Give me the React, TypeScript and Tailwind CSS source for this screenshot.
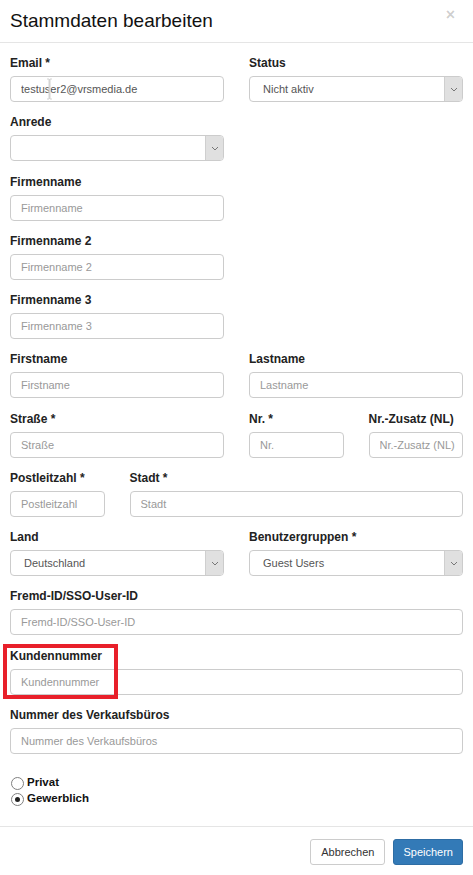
import React from 'react';

const font = "font-['Liberation_Sans',Arial,Helvetica,sans-serif]";

type Span = 1 | 2 | 3 | 4;

const spanClass: Record<Span, string> = {
  1: 'col-span-1',
  2: 'col-span-2',
  3: 'col-span-3',
  4: 'col-span-4',
};

const Label: React.FC<{ text: string }> = ({ text }) => (
  <div className="h-[17px] leading-[17px] mb-[4px] text-[12px] font-bold text-[#222] whitespace-nowrap">{text}</div>
);

const TextField: React.FC<{ label: string; span: Span; placeholder?: string; value?: string; children?: React.ReactNode }> = ({
  label,
  span,
  placeholder,
  value,
  children,
}) => (
  <div className={`${spanClass[span]} relative mb-[12.25px]`}>
    <Label text={label} />
    <div className="relative">
      <input
        readOnly
        defaultValue={value}
        placeholder={placeholder ?? label}
        className="block w-full h-[26px] pl-[10px] pr-[2px] text-[11px] text-[#555] bg-white border border-[#ccc] rounded-[4px] outline-none placeholder:text-[#999]"
      />
      {children}
    </div>
  </div>
);

const SelectField: React.FC<{ label: string; span: Span; value?: string }> = ({ label, span, value }) => (
  <div className={`${spanClass[span]} mb-[12.25px]`}>
    <Label text={label} />
    <div className="flex h-[26px] bg-white border border-[#ccc] rounded-[4px] overflow-hidden">
      <div className="flex-1 flex items-center pl-[13px] text-[11px] text-[#555]">{value}</div>
      <div className="w-[18px] flex items-center justify-center bg-[#e0e0e0] border-l border-[#cfcfcf]">
        <svg width="8" height="5" viewBox="0 0 8 5" fill="none">
          <path d="M1 1l3 3 3-3" stroke="#777" strokeWidth="1" />
        </svg>
      </div>
    </div>
  </div>
);

const Row: React.FC<{ children: React.ReactNode }> = ({ children }) => (
  <div className="grid grid-cols-4 gap-x-[25px]">{children}</div>
);

const Radio: React.FC<{ label: string; checked?: boolean }> = ({ label, checked }) => (
  <label className="flex items-center h-[16px] gap-[3px]">
    <span className="w-[13px] h-[13px] rounded-full border border-[#808080] bg-white flex items-center justify-center">
      {checked && <span className="w-[5px] h-[5px] rounded-full bg-[#222]" />}
    </span>
    <span className="text-[11.5px] font-bold text-[#111]">{label}</span>
  </label>
);

export default function App() {
  return (
    <div className={`${font} w-[473px] h-[875px] bg-white overflow-hidden`}>
      {/* header */}
      <div className="h-[43px] border-b border-[#e5e5e5] px-[10px] flex items-center justify-between">
        <h4 className="text-[19px] leading-none text-[#111] pb-[2px]">Stammdaten bearbeiten</h4>
        <span className="text-[16px] font-bold leading-none text-black/20 -mt-[12px] mr-[8px]">×</span>
      </div>

      {/* body */}
      <div className="px-[10px] pt-[12px]">
        <Row>
          <TextField label="Email *" span={2} value="testuser2@vrsmedia.de">
            <svg className="absolute left-[36px] top-[2px]" width="7" height="22" viewBox="0 0 7 22" fill="none">
              <path d="M1 1h2v20H1M6 1H4v20h2M3.5 1v20" stroke="#d4d4d4" strokeWidth="1" />
            </svg>
          </TextField>
          <SelectField label="Status" span={2} value="Nicht aktiv" />
        </Row>
        <Row>
          <SelectField label="Anrede" span={2} />
        </Row>
        <Row>
          <TextField label="Firmenname" span={2} />
        </Row>
        <Row>
          <TextField label="Firmenname 2" span={2} />
        </Row>
        <Row>
          <TextField label="Firmenname 3" span={2} />
        </Row>
        <Row>
          <TextField label="Firstname" span={2} />
          <TextField label="Lastname" span={2} />
        </Row>
        <Row>
          <TextField label="Straße *" span={2} placeholder="Straße" />
          <TextField label="Nr. *" span={1} placeholder="Nr." />
          <TextField label="Nr.-Zusatz (NL)" span={1} />
        </Row>
        <Row>
          <TextField label="Postleitzahl *" span={1} placeholder="Postleitzahl" />
          <TextField label="Stadt *" span={3} placeholder="Stadt" />
        </Row>
        <Row>
          <SelectField label="Land" span={2} value="Deutschland" />
          <SelectField label="Benutzergruppen *" span={2} value="Guest Users" />
        </Row>
        <Row>
          <TextField label="Fremd-ID/SSO-User-ID" span={4} />
        </Row>
        <Row>
          <div className="col-span-4 relative">
            <TextField label="Kundennummer" span={4} />
            {/* highlight frame */}
            <div className="absolute -left-[7px] -top-[4px] w-[115px] h-[55px] border-[4px] border-[#e8202a] pointer-events-none" />
          </div>
        </Row>
        <Row>
          <TextField label="Nummer des Verkaufsbüros" span={4} />
        </Row>

        <div className="pt-[9px] pb-[19px] pl-[1px]">
          <Radio label="Privat" />
          <Radio label="Gewerblich" checked />
        </div>
      </div>

      {/* footer */}
      <div className="border-t border-[#e5e5e5] px-[10px] pt-[12px] flex justify-end gap-[8px]">
        <button className="h-[26px] px-[10px] text-[11px] text-[#333] bg-white border border-[#ccc] rounded-[3px]">Abbrechen</button>
        <button className="h-[26px] px-[9px] text-[11px] text-white bg-[#337ab7] border border-[#2e6da4] rounded-[3px]">Speichern</button>
      </div>
    </div>
  );
}
